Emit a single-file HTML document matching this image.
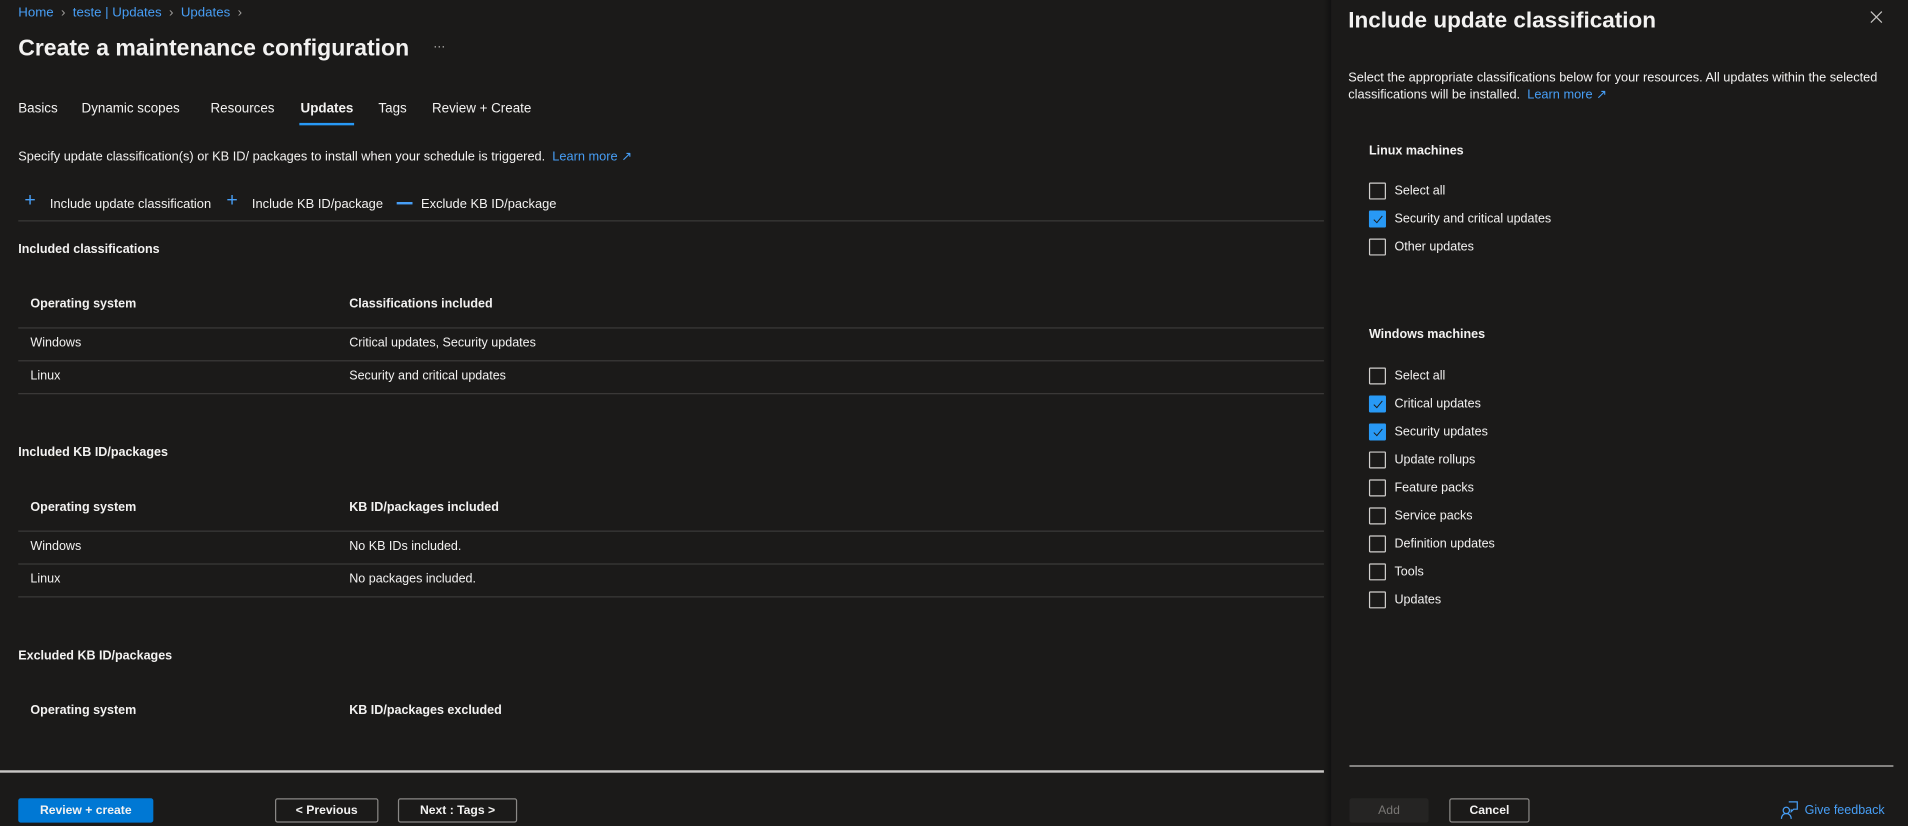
<!DOCTYPE html>
<html><head><meta charset="utf-8"><style>
html,body{margin:0;padding:0;background:#1b1a19;width:1908px;height:826px;overflow:hidden}
#s{position:absolute;left:0;top:0;width:1568px;height:679px;transform:scale(1.21684);transform-origin:0 0;font-family:"Segoe UI","Liberation Sans",sans-serif;color:#f3f2f1;font-size:10px}
.a{position:absolute;white-space:nowrap;line-height:1;transform:translateY(-40%)}
.b{font-weight:bold}
.t{font-size:10.3px}
.l{color:#479ef5}
.hl{position:absolute;height:1px;background:#3b3a39}
.cb{position:absolute;width:12px;height:12px;border:1px solid #d2d0ce;border-radius:1px;transform:translateY(-50%)}
.cb.on{background:#2899f5;border-color:#2899f5}
.cb.on svg{position:absolute;left:2px;top:2px}
.btn{position:absolute;box-sizing:border-box;height:20px;display:flex;align-items:center;justify-content:center;font-size:10px;font-weight:bold}
</style></head><body><div id="s">
<div class="a l" style="left:15px;top:10px;font-size:10.9px">Home &nbsp;<span style="color:#a19f9d">›</span>&nbsp; teste | Updates &nbsp;<span style="color:#a19f9d">›</span>&nbsp; Updates &nbsp;<span style="color:#a19f9d">›</span></div>
<div class="a" style="left:15px;top:39px;font-size:18.9px;font-weight:600">Create a maintenance configuration</div>
<div class="a" style="left:356px;top:38px;font-size:10px;color:#c8c6c4">···</div>
<div class="a" style="left:15px;top:89px;font-size:11px">Basics</div>
<div class="a" style="left:67px;top:89px;font-size:11px">Dynamic scopes</div>
<div class="a" style="left:173px;top:89px;font-size:11px">Resources</div>
<div class="a b" style="left:247px;top:89px;font-size:11px">Updates</div>
<div style="position:absolute;left:246px;top:101px;width:45px;height:2px;background:#2899f5"></div>
<div class="a" style="left:311px;top:89px;font-size:11px">Tags</div>
<div class="a" style="left:355px;top:89px;font-size:11px">Review + Create</div>
<div class="a" style="left:15px;top:128px;font-size:10.5px">Specify update classification(s) or KB ID/ packages to install when your schedule is triggered. &nbsp;<span class="l">Learn more ↗</span></div>
<div class="a" style="left:20px;top:166px;font-size:16px;color:#479ef5;font-weight:300;transform:translateY(-55%)">+</div>
<div class="a" style="left:41px;top:167px;font-size:10.6px">Include update classification</div>
<div class="a" style="left:186px;top:166px;font-size:16px;color:#479ef5;font-weight:300;transform:translateY(-55%)">+</div>
<div class="a" style="left:207px;top:167px;font-size:10.6px">Include KB ID/package</div>
<div style="position:absolute;left:326px;top:166px;width:13px;height:1.5px;background:#479ef5"></div>
<div class="a" style="left:346px;top:167px;font-size:10.6px">Exclude KB ID/package</div>
<div class="hl" style="left:15px;top:181px;width:1077px"></div>
<div class="a b t" style="left:15px;top:205px">Included classifications</div>
<div class="a b t" style="left:25px;top:250px">Operating system</div>
<div class="a b t" style="left:287px;top:250px">Classifications included</div>
<div class="hl" style="left:15px;top:269px;width:1077px"></div>
<div class="a t" style="left:25px;top:282px">Windows</div>
<div class="a t" style="left:287px;top:282px">Critical updates, Security updates</div>
<div class="hl" style="left:15px;top:296px;width:1077px"></div>
<div class="a t" style="left:25px;top:309px">Linux</div>
<div class="a t" style="left:287px;top:309px">Security and critical updates</div>
<div class="hl" style="left:15px;top:323px;width:1077px"></div>
<div class="a b t" style="left:15px;top:372px">Included KB ID/packages</div>
<div class="a b t" style="left:25px;top:417px">Operating system</div>
<div class="a b t" style="left:287px;top:417px">KB ID/packages included</div>
<div class="hl" style="left:15px;top:436px;width:1077px"></div>
<div class="a t" style="left:25px;top:449px">Windows</div>
<div class="a t" style="left:287px;top:449px">No KB IDs included.</div>
<div class="hl" style="left:15px;top:463px;width:1077px"></div>
<div class="a t" style="left:25px;top:476px">Linux</div>
<div class="a t" style="left:287px;top:476px">No packages included.</div>
<div class="hl" style="left:15px;top:490px;width:1077px"></div>
<div class="a b t" style="left:15px;top:539px">Excluded KB ID/packages</div>
<div class="a b t" style="left:25px;top:584px">Operating system</div>
<div class="a b t" style="left:287px;top:584px">KB ID/packages excluded</div>
<div style="position:absolute;left:0;top:633px;width:1092px;height:1.5px;background:#c8c6c4"></div>
<div class="btn" style="left:15px;top:656px;width:111px;background:#0078d4;border-radius:2px">Review + create</div>
<div class="btn" style="left:226px;top:656px;width:85px;border:1px solid #8a8886;border-radius:2px">&lt; Previous</div>
<div class="btn" style="left:327px;top:656px;width:98px;border:1px solid #8a8886;border-radius:2px">Next : Tags &gt;</div>

<div style="position:absolute;left:1088px;top:0;width:6px;height:679px;background:linear-gradient(to right,#1b1a19,#111)"></div>
<div style="position:absolute;left:1094px;top:0;width:474px;height:679px;background:#1b1a19"></div>
<div class="a" style="left:1108px;top:15px;font-size:18.5px;font-weight:600">Include update classification</div>
<svg style="position:absolute;left:1537px;top:9px" width="10" height="10" viewBox="0 0 10 10"><path d="M0.5 0.5L9.5 9.5M9.5 0.5L0.5 9.5" stroke="#c8c6c4" stroke-width="1"/></svg>
<div class="a" style="left:1108px;top:63px;font-size:10.5px">Select the appropriate classifications below for your resources. All updates within the selected</div>
<div class="a" style="left:1108px;top:77px;font-size:10.5px">classifications will be installed. &nbsp;<span class="l">Learn more ↗</span></div>
<div class="a b t" style="left:1125px;top:124px">Linux machines</div>
<div class="cb" style="left:1125px;top:157px"></div><div class="a t" style="left:1146px;top:157px">Select all</div>
<div class="cb on" style="left:1125px;top:180px"><svg width="9" height="9" viewBox="0 0 9 9"><path d="M1 4.5L3.5 7L8 1.5" stroke="#1b1a19" stroke-width="0.8" fill="none"/></svg></div><div class="a t" style="left:1146px;top:180px">Security and critical updates</div>
<div class="cb" style="left:1125px;top:203px"></div><div class="a t" style="left:1146px;top:203px">Other updates</div>
<div class="a b t" style="left:1125px;top:275px">Windows machines</div>
<div class="cb" style="left:1125px;top:309px"></div><div class="a t" style="left:1146px;top:309px">Select all</div>
<div class="cb on" style="left:1125px;top:332px"><svg width="9" height="9" viewBox="0 0 9 9"><path d="M1 4.5L3.5 7L8 1.5" stroke="#1b1a19" stroke-width="0.8" fill="none"/></svg></div><div class="a t" style="left:1146px;top:332px">Critical updates</div>
<div class="cb on" style="left:1125px;top:355px"><svg width="9" height="9" viewBox="0 0 9 9"><path d="M1 4.5L3.5 7L8 1.5" stroke="#1b1a19" stroke-width="0.8" fill="none"/></svg></div><div class="a t" style="left:1146px;top:355px">Security updates</div>
<div class="cb" style="left:1125px;top:378px"></div><div class="a t" style="left:1146px;top:378px">Update rollups</div>
<div class="cb" style="left:1125px;top:401px"></div><div class="a t" style="left:1146px;top:401px">Feature packs</div>
<div class="cb" style="left:1125px;top:424px"></div><div class="a t" style="left:1146px;top:424px">Service packs</div>
<div class="cb" style="left:1125px;top:447px"></div><div class="a t" style="left:1146px;top:447px">Definition updates</div>
<div class="cb" style="left:1125px;top:470px"></div><div class="a t" style="left:1146px;top:470px">Tools</div>
<div class="cb" style="left:1125px;top:493px"></div><div class="a t" style="left:1146px;top:493px">Updates</div>
<div style="position:absolute;left:1109px;top:629px;width:447px;height:1px;background:#c8c6c4"></div>
<div class="btn" style="left:1109px;top:656px;width:65px;background:#252423;color:#797775;font-weight:normal;border-radius:2px">Add</div>
<div class="btn" style="left:1191px;top:656px;width:66px;border:1px solid #8a8886;border-radius:2px">Cancel</div>
<svg style="position:absolute;left:1463px;top:658px" width="16" height="16" viewBox="0 0 16 16"><circle cx="5" cy="8" r="2.6" fill="none" stroke="#479ef5" stroke-width="1"/><path d="M1 15c0-3 2-4.5 4-4.5s4 1.5 4 4.5M7 1h7v6h-3l-2 2V7" fill="none" stroke="#479ef5" stroke-width="1"/></svg>
<div class="a l" style="left:1483px;top:666px;font-size:10.3px">Give feedback</div>
</div></body></html>
